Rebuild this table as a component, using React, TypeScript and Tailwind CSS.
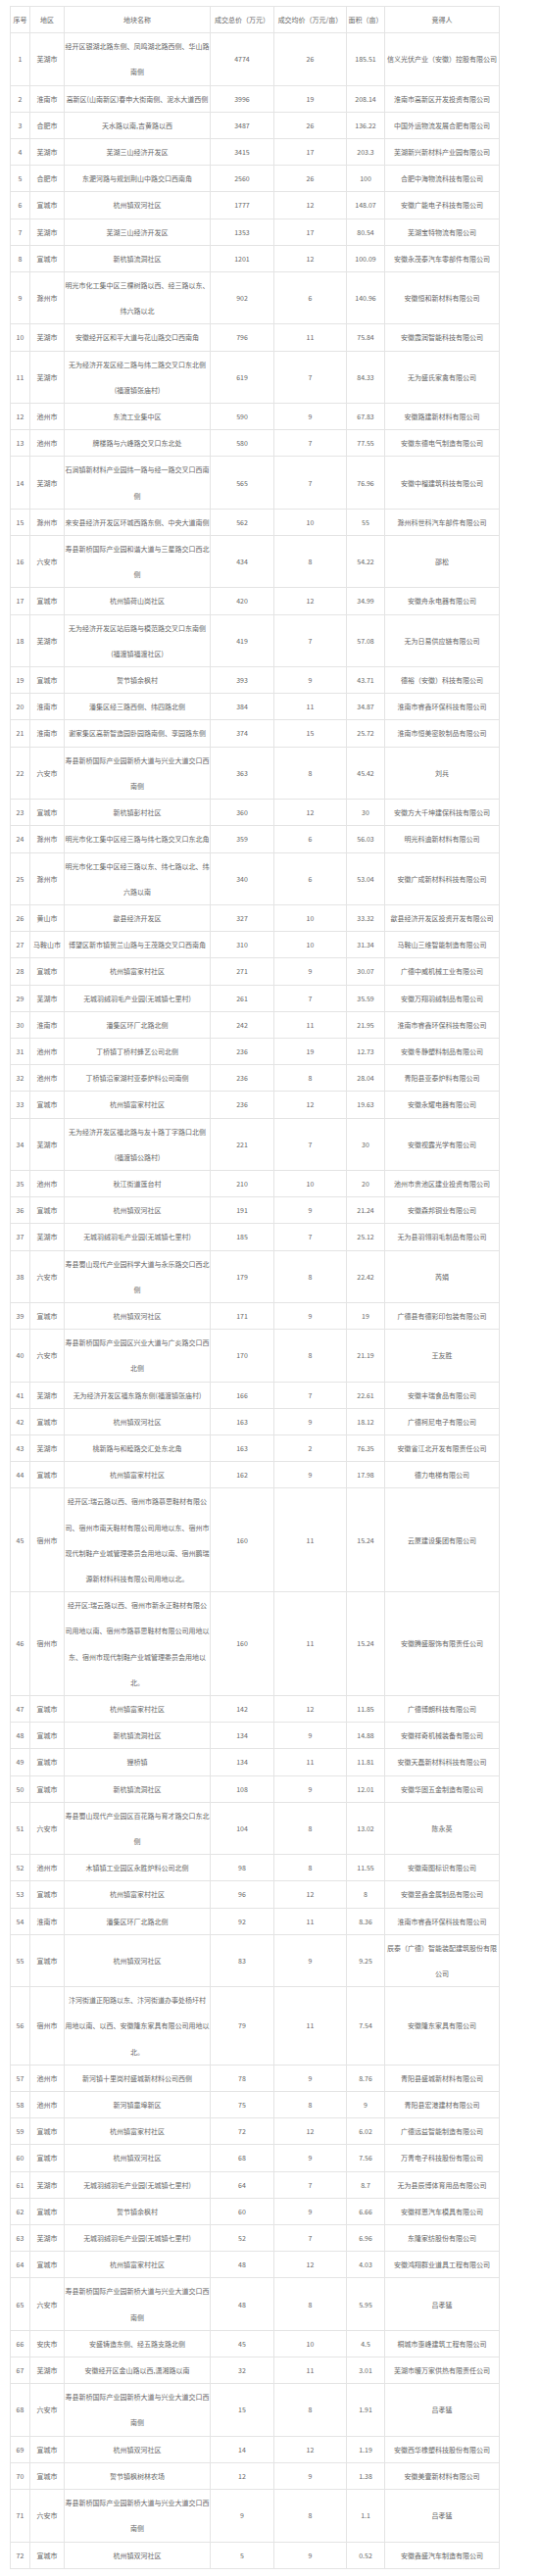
const header = ["序号", "地区", "地块名称", "成交总价（万元）", "成交均价（万元/亩）", "面积（亩）", "竞得人"];

// [地区, 地块名称, 成交总价, 成交均价, 面积, 竞得人] — "\n" marks a line break
const rows: string[][] = [
  ["芜湖市", "经开区银湖北路东侧、凤鸣湖北路西侧、华山路\n南侧", "4774", "26", "185.51", "信义光伏产业（安徽）控股有限公司"],
  ["淮南市", "高新区(山南新区)春申大街南侧、泥水大道西侧", "3996", "19", "208.14", "淮南市高新区开发投资有限公司"],
  ["合肥市", "天水路以南,吉黄路以西", "3487", "26", "136.22", "中国外运物流发展合肥有限公司"],
  ["芜湖市", "芜湖三山经济开发区", "3415", "17", "203.3", "芜湖新兴新材料产业园有限公司"],
  ["合肥市", "东淝河路与规划荆山中路交口西南角", "2560", "26", "100", "合肥中海物流科技有限公司"],
  ["宣城市", "杭州镇双河社区", "1777", "12", "148.07", "安徽广能电子科技有限公司"],
  ["芜湖市", "芜湖三山经济开发区", "1353", "17", "80.54", "芜湖宝特物流有限公司"],
  ["宣城市", "新杭镇流洞社区", "1201", "12", "100.09", "安徽永茂泰汽车零部件有限公司"],
  ["滁州市", "明光市化工集中区三棵树路以西、经三路以东、\n纬六路以北", "902", "6", "140.96", "安徽恒和新材料有限公司"],
  ["芜湖市", "安徽经开区和平大道与花山路交口西南角", "796", "11", "75.84", "安徽霞润智能科技有限公司"],
  ["芜湖市", "无为经济开发区经二路与纬二路交叉口东北侧\n(福渡镇张庙村)", "619", "7", "84.33", "无为盛氏家禽有限公司"],
  ["池州市", "东流工业集中区", "590", "9", "67.83", "安徽路建新材料有限公司"],
  ["池州市", "牌楼路与六峰路交叉口东北处", "580", "7", "77.55", "安徽东德电气制造有限公司"],
  ["芜湖市", "石涧镇新材料产业园纬一路与经一路交叉口西南\n侧", "565", "7", "76.96", "安徽中榴建筑科技有限公司"],
  ["滁州市", "来安县经济开发区环城西路东侧、中央大道南侧", "562", "10", "55", "滁州科世科汽车部件有限公司"],
  ["六安市", "寿县新桥国际产业园和谐大道与三星路交口西北\n侧", "434", "8", "54.22", "邵松"],
  ["宣城市", "杭州镇荷山岗社区", "420", "12", "34.99", "安徽舟永电器有限公司"],
  ["芜湖市", "无为经济开发区站后路与模范路交叉口东南侧\n(福渡镇福渡社区)", "419", "7", "57.08", "无为日易供应链有限公司"],
  ["宣城市", "誓节镇余枫村", "393", "9", "43.71", "德裕（安徽）科技有限公司"],
  ["淮南市", "潘集区经三路西侧、纬四路北侧", "384", "11", "34.87", "淮南市睿鑫环保科技有限公司"],
  ["淮南市", "谢家集区高新智造园卧园路南侧、孪园路东侧", "374", "15", "25.72", "淮南市恒美密胶制品有限公司"],
  ["六安市", "寿县新桥国际产业园新桥大道与兴业大道交口西\n南侧", "363", "8", "45.42", "刘兵"],
  ["宣城市", "新杭镇彭村社区", "360", "12", "30", "安徽方大千坤建保科技有限公司"],
  ["滁州市", "明光市化工集中区经三路与纬七路交叉口东北角", "359", "6", "56.03", "明光科迪新材料有限公司"],
  ["滁州市", "明光市化工集中区经三路以东、纬七路以北、纬\n六路以南", "340", "6", "53.04", "安徽广成新材料科技有限公司"],
  ["黄山市", "歙县经济开发区", "327", "10", "33.32", "歙县经济开发区投资开发有限公司"],
  ["马鞍山市", "博望区新市镇贺兰山路与王茂路交叉口西南角", "310", "10", "31.34", "马鞍山三维智能制造有限公司"],
  ["宣城市", "杭州镇富家村社区", "271", "9", "30.07", "广德中威机械工业有限公司"],
  ["芜湖市", "无城羽绒羽毛产业园(无城镇七里村)", "261", "7", "35.59", "安徽万翔羽绒制品有限公司"],
  ["淮南市", "潘集区环厂北路北侧", "242", "11", "21.95", "淮南市睿鑫环保科技有限公司"],
  ["池州市", "丁桥镇丁桥村蜂艺公司北侧", "236", "19", "12.73", "安徽冬静塑料制品有限公司"],
  ["池州市", "丁桥镇沿家湖村亚泰炉料公司南侧", "236", "8", "28.04", "青阳县亚泰炉料有限公司"],
  ["宣城市", "杭州镇富家村社区", "236", "12", "19.63", "安徽永耀电器有限公司"],
  ["芜湖市", "无为经济开发区福北路与友十路丁字路口北侧\n(福渡镇公路村)", "221", "7", "30", "安徽视露光学有限公司"],
  ["池州市", "秋江街道莲台村", "210", "10", "20", "池州市贵池区建业投资有限公司"],
  ["宣城市", "杭州镇双河社区", "191", "9", "21.24", "安徽森邦铜业有限公司"],
  ["芜湖市", "无城羽绒羽毛产业园(无城镇七里村)", "185", "7", "25.12", "无为县羽翎羽毛制品有限公司"],
  ["六安市", "寿县蜀山现代产业园科学大道与永乐路交口西北\n侧", "179", "8", "22.42", "芮娟"],
  ["宣城市", "杭州镇双河社区", "171", "9", "19", "广德县有德彩印包装有限公司"],
  ["六安市", "寿县新桥国际产业园区兴业大道与广炎路交口西\n北侧", "170", "8", "21.19", "王友胜"],
  ["芜湖市", "无为经济开发区福东路东侧(福渡镇张庙村)", "166", "7", "22.61", "安徽丰瑞食品有限公司"],
  ["宣城市", "杭州镇双河社区", "163", "9", "18.12", "广德柯尼电子有限公司"],
  ["芜湖市", "桃新路与和睦路交汇处东北角", "163", "2", "76.35", "安徽省江北开发有限责任公司"],
  ["宣城市", "杭州镇富家村社区", "162", "9", "17.98", "德力电梯有限公司"],
  ["宿州市", "经开区:瑞云路以西、宿州市路慕思鞋材有限公\n司、宿州市南天鞋材有限公司用地以东、宿州市\n现代制鞋产业城管理委员会用地以南、宿州鹏瑞\n源新材料科技有限公司用地以北。", "160", "11", "15.24", "云厦建设集团有限公司"],
  ["宿州市", "经开区:瑞云路以西、宿州市新永正鞋材有限公\n司用地以南、宿州市路慕思鞋材有限公司用地以\n东、宿州市现代制鞋产业城管理委员会用地以\n北。", "160", "11", "15.24", "安徽腾盛服饰有限责任公司"],
  ["宣城市", "杭州镇富家村社区", "142", "12", "11.85", "广德博朗科技有限公司"],
  ["宣城市", "新杭镇流洞社区", "134", "9", "14.88", "安徽祥奇机械装备有限公司"],
  ["宣城市", "狸桥镇", "134", "11", "11.81", "安徽天磊新材料科技有限公司"],
  ["宣城市", "新杭镇流洞社区", "108", "9", "12.01", "安徽华固五金制造有限公司"],
  ["六安市", "寿县蜀山现代产业园区百花路与育才路交口东北\n侧", "104", "8", "13.02", "陈永英"],
  ["池州市", "木镇镇工业园区永胜炉料公司北侧", "98", "8", "11.55", "安徽南图标识有限公司"],
  ["宣城市", "杭州镇富家村社区", "96", "12", "8", "安徽昱鑫金属制品有限公司"],
  ["淮南市", "潘集区环厂北路北侧", "92", "11", "8.36", "淮南市睿鑫环保科技有限公司"],
  ["宣城市", "杭州镇双河社区", "83", "9", "9.25", "辰泰（广德）智能装配建筑股份有限\n公司"],
  ["宿州市", "汴河街道正阳路以东、汴河街道办事处杨圩村\n用地以南、以西、安徽隆东家具有限公司用地以\n北。", "79", "11", "7.54", "安徽隆东家具有限公司"],
  ["池州市", "新河镇十里岗村盛城新材料公司西侧", "78", "9", "8.76", "青阳县盛城新材料有限公司"],
  ["池州市", "新河镇童埠新区", "75", "8", "9", "青阳县宏港建材有限公司"],
  ["宣城市", "杭州镇富家村社区", "72", "12", "6.02", "广德远益智能制造有限公司"],
  ["宣城市", "杭州镇双河社区", "68", "9", "7.56", "万青电子科技股份有限公司"],
  ["芜湖市", "无城羽绒羽毛产业园(无城镇七里村)", "64", "7", "8.7", "无为县辰博体育用品有限公司"],
  ["宣城市", "誓节镇余枫村", "60", "9", "6.66", "安徽祥恩汽车模具有限公司"],
  ["芜湖市", "无城羽绒羽毛产业园(无城镇七里村)", "52", "7", "6.96", "东隆家纺股份有限公司"],
  ["宣城市", "杭州镇富家村社区", "48", "12", "4.03", "安徽鸿翔群业道具工程有限公司"],
  ["六安市", "寿县新桥国际产业园新桥大道与兴业大道交口西\n南侧", "48", "8", "5.95", "吕孝猛"],
  ["安庆市", "安盛铸造东侧、经五路支路北侧", "45", "10", "4.5", "桐城市惠峰建筑工程有限公司"],
  ["芜湖市", "安徽经开区金山路以西,潇湘路以南", "32", "11", "3.01", "芜湖市暖万家供热有限责任公司"],
  ["六安市", "寿县新桥国际产业园新桥大道与兴业大道交口西\n南侧", "15", "8", "1.91", "吕孝猛"],
  ["宣城市", "杭州镇双河社区", "14", "12", "1.19", "安徽西华橡塑科技股份有限公司"],
  ["宣城市", "誓节镇枫树林农场", "12", "9", "1.38", "安徽美壹新材料有限公司"],
  ["六安市", "寿县新桥国际产业园新桥大道与兴业大道交口西\n南侧", "9", "8", "1.1", "吕孝猛"],
  ["宣城市", "杭州镇双河社区", "5", "9", "0.52", "安徽鑫盛汽车制造有限公司"],
];

const cell = "border border-[#e4e4e4] p-0 text-center align-middle whitespace-pre";

export default function App() {
  return (
    <div className="min-h-screen bg-white pl-[10px] pt-[6px] text-[7px] leading-[26.2px] text-[#666] [font-family:'Noto_Sans_CJK_SC','Noto_Sans',sans-serif]">
      <table className="w-[499px] table-fixed border-collapse">
        <colgroup>
          <col className="w-[20px]" />
          <col className="w-[35px]" />
          <col className="w-[149px]" />
          <col className="w-[65px]" />
          <col className="w-[74px]" />
          <col className="w-[39px]" />
          <col className="w-[117px]" />
        </colgroup>
        <thead>
          <tr>
            {header.map((h) => (
              <th key={h} className={`${cell} font-normal`}>
                {h}
              </th>
            ))}
          </tr>
        </thead>
        <tbody>
          {rows.map((r, i) => (
            <tr key={i}>
              <td className={cell}>{i + 1}</td>
              {r.map((v, j) => (
                <td key={j} className={cell}>
                  {v}
                </td>
              ))}
            </tr>
          ))}
        </tbody>
      </table>
    </div>
  );
}
